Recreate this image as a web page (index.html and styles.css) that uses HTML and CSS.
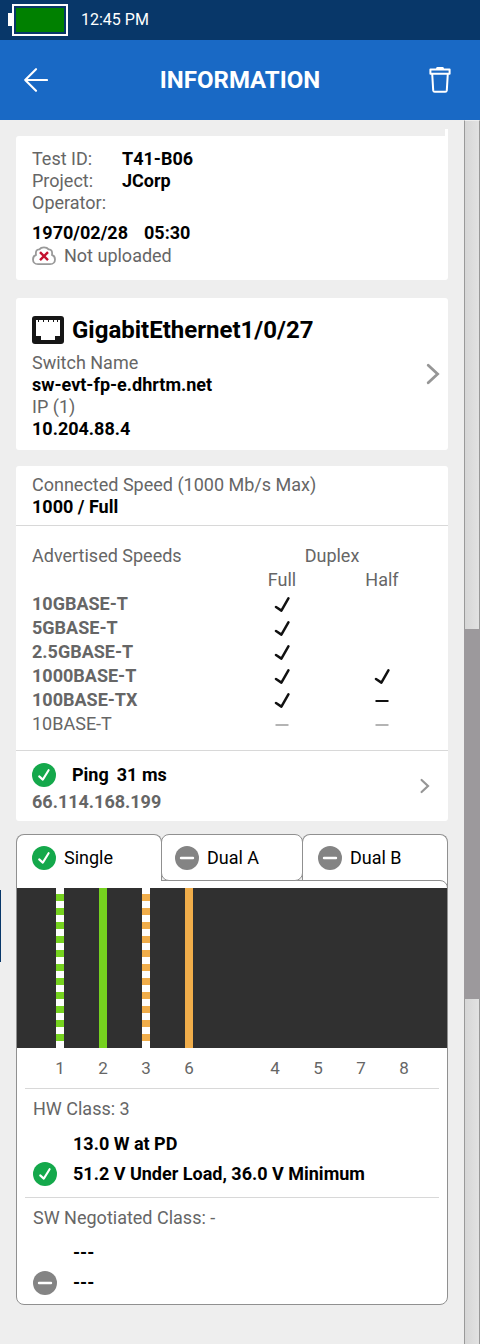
FILE: index.html
```
<!DOCTYPE html>
<html lang="en">

<head>
    <meta charset="UTF-8">
    <meta name="viewport" content="width=device-width, initial-scale=1.0">
    <title>Information</title>
    <link rel="stylesheet" href="styles.css">
</head>

<body>
    <!-- shared icons -->
    <svg class="icon-defs" width="0" height="0" aria-hidden="true">
        <symbol id="icon-ok" viewBox="0 0 24 24">
            <circle cx="12" cy="12" r="12" fill="#14a84b" />
            <path d="M7.2 13.4 10.8 16.6 16.6 7.2" fill="none" stroke="#fff" stroke-width="2.1" stroke-linecap="round" stroke-linejoin="round" />
        </symbol>
        <symbol id="icon-none" viewBox="0 0 24 24">
            <circle cx="12" cy="12" r="12" fill="#848484" />
            <path d="M6 12h12" stroke="#fff" stroke-width="2.4" stroke-linecap="round" />
        </symbol>
        <symbol id="icon-check" viewBox="0 0 16 16">
            <path d="M2 11 7.4 14.6 14.4 2.4" fill="none" stroke="#111" stroke-width="2.5" stroke-linecap="round" stroke-linejoin="round" />
        </symbol>
        <symbol id="icon-dash" viewBox="0 0 16 16">
            <path d="M1.5 9h13" stroke="currentColor" stroke-width="2" />
        </symbol>
    </svg>

    <div class="status-bar">
        <svg class="battery" width="60" height="32" viewBox="0 0 60 32" aria-label="Battery full">
            <rect x="0" y="9" width="4" height="13" fill="#fff" />
            <rect x="5" y="1" width="54" height="30" fill="none" stroke="#fff" stroke-width="2" />
            <rect x="8" y="4" width="48" height="24" fill="#008000" />
        </svg>
        <span class="clock">12:45 PM</span>
    </div>

    <header class="app-bar">
        <button type="button" class="icon-btn back" aria-label="Back">
            <svg width="24" height="24" viewBox="0 0 24 24">
                <path d="M23 12H1.2M12 1.2 1.2 12 12 22.8" fill="none" stroke="#fff" stroke-width="2.1" stroke-linecap="round" stroke-linejoin="round" />
            </svg>
        </button>
        <h1>INFORMATION</h1>
        <button type="button" class="icon-btn" aria-label="Delete">
            <svg width="24" height="28" viewBox="0 0 24 28" fill="none" stroke="#fff" stroke-width="2" stroke-linejoin="round">
                <path d="M2.4 3.6H21.6V7.8H2.4ZM4.2 7.8 5.2 24.4Q5.4 25.8 6.8 25.8H17.2Q18.6 25.8 18.8 24.4L19.8 7.8" />
                <path d="M9.4 2.2h5.2" stroke-width="2.4" stroke-linecap="round" />
            </svg>
        </button>
    </header>

    <div class="page">
        <main>
            <section class="card test-card">
                <dl class="test-info">
                    <dt>Test ID:</dt>
                    <dd>T41-B06</dd>
                    <dt>Project:</dt>
                    <dd>JCorp</dd>
                    <dt>Operator:</dt>
                    <dd></dd>
                </dl>
                <p class="test-date"><span>1970/02/28</span><span>05:30</span></p>
                <p class="upload">
                    <svg width="24" height="20" viewBox="0 0 24 20">
                        <path d="M6 18.2C2.6 18.2 1 15.8 1 13.4 1 11 2.4 9.4 4 8.8 3.4 5 5 3.2 7.4 3.4 8.6 1.8 10.2 1.4 12 1.4S15.4 1.8 16.6 3.4C19 3.2 20.6 5 20 8.8 21.6 9.4 23 11 23 13.4 23 15.8 21.4 18.2 18 18.2Z" fill="none" stroke="#999" stroke-width="1.8" />
                        <path d="M8 6.2 16 14.2M16 6.2 8 14.2" stroke="#c4122f" stroke-width="2.4" />
                    </svg>
                    Not uploaded
                </p>
            </section>

            <a href="#" class="card switch-card">
                <div class="switch-info">
                    <h2>
                        <svg width="32" height="28" viewBox="0 0 32 28">
                            <rect width="32" height="28" rx="3" fill="#161616" />
                            <path d="M4 4H6V6H7V4H11V6H12V4H16V6H17V4H21V6H22V4H25V6H26V4H28V20H23V24H9V20H4Z" fill="#fff" />
                        </svg>
                        GigabitEthernet1/0/27
                    </h2>
                    <p>Switch Name</p>
                    <p class="value">sw-evt-fp-e.dhrtm.net</p>
                    <p>IP (1)</p>
                    <p class="value">10.204.88.4</p>
                </div>
                <svg width="14" height="22" viewBox="0 0 14 22">
                    <path d="M2.2 2.2 11.6 11 2.2 19.8" fill="none" stroke="#969696" stroke-width="2.8" stroke-linecap="round" />
                </svg>
            </a>

            <section class="card link-card">
                <div class="speed">
                    <p>Connected Speed (1000 Mb/s Max)</p>
                    <p class="value">1000 / Full</p>
                </div>
                <div class="advertised">
                    <table>
                        <thead>
                            <tr>
                                <th class="name">Advertised Speeds</th>
                                <th colspan="2">Duplex</th>
                            </tr>
                            <tr>
                                <td></td>
                                <th class="duplex">Full</th>
                                <th class="duplex">Half</th>
                            </tr>
                        </thead>
                        <tbody>
                            <tr>
                                <th class="name">10GBASE-T</th>
                                <td><svg class="mark"><use href="#icon-check" /></svg></td>
                                <td></td>
                            </tr>
                            <tr>
                                <th class="name">5GBASE-T</th>
                                <td><svg class="mark"><use href="#icon-check" /></svg></td>
                                <td></td>
                            </tr>
                            <tr>
                                <th class="name">2.5GBASE-T</th>
                                <td><svg class="mark"><use href="#icon-check" /></svg></td>
                                <td></td>
                            </tr>
                            <tr>
                                <th class="name">1000BASE-T</th>
                                <td><svg class="mark"><use href="#icon-check" /></svg></td>
                                <td><svg class="mark"><use href="#icon-check" /></svg></td>
                            </tr>
                            <tr>
                                <th class="name">100BASE-TX</th>
                                <td><svg class="mark"><use href="#icon-check" /></svg></td>
                                <td><svg class="mark"><use href="#icon-dash" /></svg></td>
                            </tr>
                            <tr class="off">
                                <th class="name">10BASE-T</th>
                                <td><svg class="mark"><use href="#icon-dash" /></svg></td>
                                <td><svg class="mark"><use href="#icon-dash" /></svg></td>
                            </tr>
                        </tbody>
                    </table>
                </div>
                <a href="#" class="ping">
                    <div>
                        <p class="ping-time"><svg class="state"><use href="#icon-ok" /></svg><span>Ping</span><span>31 ms</span></p>
                        <p class="ping-ip">66.114.168.199</p>
                    </div>
                    <svg width="10" height="16" viewBox="0 0 10 16">
                        <path d="M1.6 2 8 8 1.6 14" fill="none" stroke="#969696" stroke-width="2.2" stroke-linecap="round" />
                    </svg>
                </a>
            </section>

            <section class="poe">
                <div class="tabs" role="tablist">
                    <button type="button" class="tab active" role="tab" aria-selected="true"><svg class="state"><use href="#icon-ok" /></svg>Single</button>
                    <button type="button" class="tab middle" role="tab" aria-selected="false"><svg class="state"><use href="#icon-none" /></svg>Dual A</button>
                    <button type="button" class="tab last" role="tab" aria-selected="false"><svg class="state"><use href="#icon-none" /></svg>Dual B</button>
                </div>
                <div class="panel" role="tabpanel">
                    <div class="wires">
                        <i class="wire green striped"></i>
                        <i class="wire green"></i>
                        <i class="wire orange striped"></i>
                        <i class="wire orange"></i>
                    </div>
                    <div class="pins">
                        <span>1</span>
                        <span>2</span>
                        <span>3</span>
                        <span>6</span>
                        <span></span>
                        <span>4</span>
                        <span>5</span>
                        <span>7</span>
                        <span>8</span>
                    </div>
                    <div class="class-info">
                        <p>HW Class: 3</p>
                        <ul>
                            <li>13.0 W at PD</li>
                            <li><svg class="state"><use href="#icon-ok" /></svg>51.2 V Under Load, 36.0 V Minimum</li>
                        </ul>
                    </div>
                    <div class="class-info">
                        <p>SW Negotiated Class: -</p>
                        <ul>
                            <li>---</li>
                            <li><svg class="state"><use href="#icon-none" /></svg>---</li>
                        </ul>
                    </div>
                </div>
            </section>
        </main>
        <div class="scrollbar">
            <div class="thumb" style="top: 41.5%; height: 30.3%"></div>
        </div>
    </div>
    <div class="edge-handle"></div>
</body>

</html>
```
FILE: styles.css
```
* {
    margin: 0;
    padding: 0;
    box-sizing: border-box;
}

body {
    position: relative;
    display: flex;
    flex-direction: column;
    min-height: 100vh;
    background: #eee;
    color: #666;
    font-family: Roboto, "Liberation Sans", sans-serif;
    font-size: 18px;
    line-height: 22px;
}

a {
    color: inherit;
    text-decoration: none;
}

button {
    border: 0;
    background: none;
    font: inherit;
    cursor: pointer;
}

svg {
    display: block;
    flex: none;
}

.icon-defs {
    position: absolute;
}

.status-bar {
    display: flex;
    align-items: center;
    gap: 13px;
    height: 40px;
    padding: 0 8px;
    background: #083769;
    color: #fff;
    font-size: 16px;
}

.app-bar {
    display: flex;
    align-items: center;
    justify-content: space-between;
    height: 80px;
    padding: 0 20px 0 16px;
    background: #1969c5;
    color: #fff;
}

.app-bar h1 {
    font-size: 24px;
    line-height: 32px;
}

.icon-btn {
    display: flex;
    align-items: center;
    justify-content: center;
    width: 40px;
    height: 40px;
}

.back {
    margin-right: 4px;
}

.page {
    display: flex;
    flex: 1;
}

main {
    flex: 1;
    min-width: 0;
    padding: 16px;
}

.card {
    display: block;
    margin-bottom: 16px;
    border-radius: 3px;
    background: #fff;
}

.value {
    color: #000;
    font-weight: 700;
}

/* test info */
.test-card {
    position: relative;
    margin-bottom: 18px;
    padding: 12px 16px;
}

.test-card::before {
    content: '';
    position: absolute;
    top: -7px;
    right: 0;
    width: 3px;
    height: 10px;
    background: #fff;
}

.test-info {
    display: grid;
    grid-template-columns: 90px 1fr;
}

.test-info dd {
    color: #000;
    font-weight: 700;
}

.test-date {
    display: flex;
    gap: 16px;
    margin-top: 8px;
    color: #000;
    font-weight: 700;
}

.upload {
    display: flex;
    align-items: center;
    gap: 8px;
    line-height: 24px;
}

/* switch */
.switch-card {
    display: flex;
    align-items: center;
    padding: 10px 8px 10px 16px;
}

.switch-info {
    flex: 1;
}

.switch-info h2 {
    display: flex;
    align-items: center;
    gap: 8px;
    margin: 6px 0;
    color: #000;
    font-size: 24px;
    line-height: 32px;
}

/* link speeds */
.link-card {
    margin-bottom: 13px;
}

.speed {
    padding: 8px 16px 7px;
    border-bottom: 1px solid #d8d8d8;
}

.advertised {
    padding: 18px 16px 14px;
    border-bottom: 1px solid #d8d8d8;
}

.advertised table {
    width: 100%;
    border-collapse: collapse;
    line-height: 24px;
    text-align: center;
}

.advertised tr {
    height: 24px;
}

.advertised thead th {
    font-weight: 400;
}

.advertised .name {
    text-align: left;
}

.advertised .duplex {
    width: 100px;
}

.advertised .off th {
    font-weight: 400;
}

.mark {
    width: 16px;
    height: 16px;
    margin: 0 auto;
    color: #111;
}

.off .mark {
    color: #b4b4b4;
}

.ping {
    display: flex;
    align-items: center;
    justify-content: space-between;
    padding: 8px 18px 8px 16px;
    font-weight: 700;
}

.ping-time {
    display: flex;
    align-items: center;
    gap: 8px;
    margin: 4px 0;
    color: #000;
}

.state {
    width: 24px;
    height: 24px;
}

.ping-time .state {
    margin-right: 8px;
}

/* PoE tabs */
.tabs {
    display: flex;
    height: 46px;
}

.tab {
    display: flex;
    align-items: center;
    gap: 8px;
    flex: 1;
    height: 47px;
    padding: 0 15px;
    border: 1px solid #909090;
    border-radius: 8px;
    background: #fff;
    color: #000;
}

.tab.active {
    position: relative;
    z-index: 1;
    border-bottom: 0;
    border-radius: 8px 8px 0 0;
}

.tab.middle {
    position: relative;
    z-index: 2;
    margin: 0 -1px;
    padding: 0 13px;
}

.tab.last {
    height: 56px;
    padding-bottom: 9px;
    border-bottom: 0;
    border-radius: 8px 8px 0 0;
}

.panel {
    position: relative;
    padding-top: 7px;
    border: 1px solid #909090;
    border-radius: 0 8px 8px 8px;
    background: #fff;
}

.wires,
.pins {
    display: grid;
    grid-template-columns: repeat(9, 1fr);
    justify-items: center;
    padding: 0 5%;
}

.wires {
    height: 160px;
    background: #303030;
}

.wire {
    width: 8px;
    height: 100%;
}

.green {
    background-color: #76d21f;
}

.orange {
    background-color: #f0ad4a;
}

.striped {
    background-image: repeating-linear-gradient(to top, #fff 0 7px, transparent 7px 14px);
}

.pins {
    font-size: 17px;
    line-height: 40px;
}

.class-info {
    margin: 0 8px;
    padding: 9px 8px 8px;
    border-top: 1px solid #d8d8d8;
}

.class-info:last-child {
    padding-bottom: 6px;
}

.class-info ul {
    margin-top: 9px;
    list-style: none;
}

.class-info li {
    display: flex;
    align-items: center;
    height: 30px;
    padding-left: 40px;
    color: #000;
    font-weight: 700;
}

.class-info li .state {
    margin: 0 16px 0 -40px;
}

/* scroll track */
.scrollbar {
    position: relative;
    width: 16px;
    border: 1px solid #999;
    border-top-color: #eee;
    border-bottom: 0;
    background: linear-gradient(to right, #d6d6d6, #e2e2e2);
}

.thumb {
    position: absolute;
    left: -1px;
    right: -1px;
    background: #9c999c;
}

.edge-handle {
    position: absolute;
    top: 890px;
    left: 0;
    width: 1px;
    height: 72px;
    background: #083769;
}
```
